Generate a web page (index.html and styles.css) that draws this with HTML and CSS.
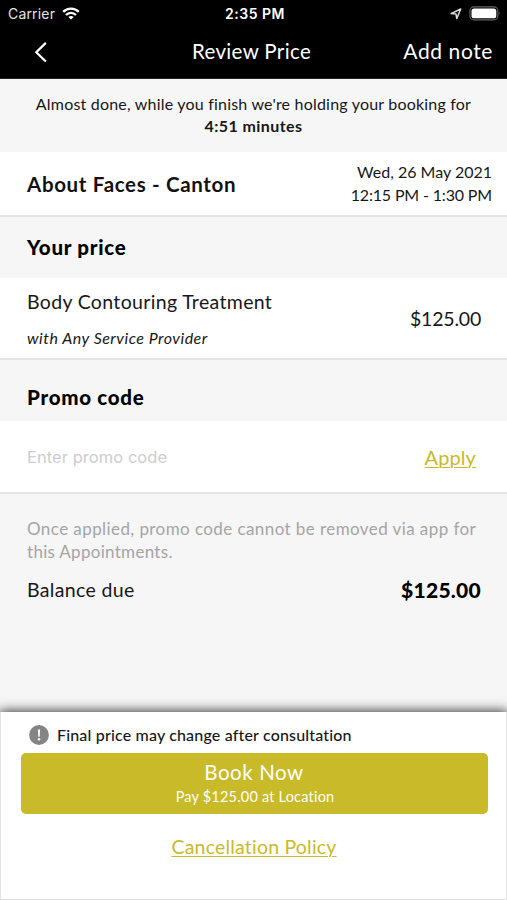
FILE: index.html
```html
<!DOCTYPE html>
<html lang="en">
<head>
<meta charset="utf-8">
<title>Review Price</title>
<link rel="stylesheet" href="styles.css">
</head>
<body>
<div class="screen">
  <header class="header">
    <div class="status">
      <div class="status-left">
        <span class="carrier">Carrier</span>
        <svg class="wifi" viewBox="0 0 18 13" width="18" height="13" fill="none" stroke="#fff" stroke-width="2.3">
          <path d="M1.200 4.900C5.400.6 12.600.6 16.800 4.900"/>
          <path d="M4 8C6.700 5.100 11.300 5.100 14 8"/>
          <path d="M9 12.600 6.300 9.900Q9 7.900 11.700 9.900Z" fill="#fff" stroke="none"/>
        </svg>
      </div>
      <span class="clock">2:35 PM</span>
      <div class="status-right">
        <svg viewBox="0 0 12 12" width="12" height="12" fill="none" stroke="#ddd" stroke-width="1.5" stroke-linejoin="round"><path d="M1.200 5.600 10.700 1 6.800 10.500 6 6.100Z"/></svg>
        <svg viewBox="0 0 32 15" width="32" height="15"><rect x=".9" y=".9" width="28" height="13" rx="4" fill="none" stroke="#666" stroke-width="1.100"/><rect x="2.500" y="2.500" width="24.800" height="9.800" rx="2.600" fill="#fff"/><path d="M30.300 5.200Q31.700 7.400 30.300 9.600Z" fill="#777"/></svg>
      </div>
    </div>
    <nav class="nav">
      <svg class="back" viewBox="0 0 14 22" width="14" height="22" fill="none" stroke="#fff" stroke-width="2.200"><path d="M11.800 1.900 2.300 11.200 11.800 20.500"/></svg>
      <h1 class="title">Review Price</h1>
      <a class="add-note">Add note</a>
    </nav>
  </header>

  <section class="hold">
    <p class="hold-text">Almost done, while you finish we're holding your booking for</p>
    <p class="hold-time">4:51 minutes</p>
  </section>

  <section class="row salon">
    <h2 class="salon-name">About Faces - Canton</h2>
    <div class="when"><p>Wed, 26 May 2021</p><p class="hours">12:15 PM - 1:30 PM</p></div>
  </section>

  <h3 class="heading price-heading">Your price</h3>
  <section class="row service">
    <div>
      <p class="service-name">Body Contouring Treatment</p>
      <p class="provider">with Any Service Provider</p>
    </div>
    <span class="price">$125.00</span>
  </section>

  <h3 class="heading promo-heading">Promo code</h3>
  <section class="row promo">
    <span class="placeholder">Enter promo code</span>
    <a class="apply">Apply</a>
  </section>

  <section class="summary">
    <p class="note">Once applied, promo code cannot be removed via app for<br><span class="note-end">this Appointments.</span></p>
    <div class="balance"><span class="balance-label">Balance due</span><strong class="balance-value">$125.00</strong></div>
  </section>

  <footer class="footer">
    <div class="notice">
      <svg viewBox="0 0 20 20" width="20" height="20"><circle cx="10" cy="10" r="9.900" fill="#858585"/><path d="M8.900 4.500h2.200l-.4 7.300H9.300Z" fill="#fff"/><circle cx="10" cy="14.300" r="1.200" fill="#fff"/></svg>
      <span class="notice-text">Final price may change after consultation</span>
    </div>
    <button class="book"><span class="book-title">Book Now</span><span class="book-sub">Pay $125.00 at Location</span></button>
    <a class="policy">Cancellation Policy</a>
  </footer>
</div>
</body>
</html>
```
FILE: styles.css
```css
* { box-sizing: border-box; margin: 0; }
body { background: #f6f6f6; color: #171717; font-family: Lato, "Liberation Sans", sans-serif; }
.screen { display: flex; flex-direction: column; width: 507px; height: 900px; overflow: hidden; }

.header { height: 79px; background: #000; color: #fff; border-bottom: 1px solid #222; }
.status { display: grid; grid-template-columns: 1fr auto 1fr; align-items: center; height: 27px; padding: 0 6px 0 8px; font: 14px/27px Inter, sans-serif; }
.status-left { display: flex; align-items: center; gap: 7px; }
.carrier { color: #e4e4e4; letter-spacing: .18px; }
.clock { margin-left: 1px; font-weight: 600; letter-spacing: .5px; }
.status-right { display: flex; align-items: center; justify-content: flex-end; gap: 7px; }
.nav { display: grid; grid-template-columns: 1fr auto 1fr; align-items: center; height: 50px; padding: 0 14px 0 34px; line-height: 48px; }
.title { margin-left: -24px; font-size: 20.500px; font-weight: 400; line-height: 48px; letter-spacing: .36px; }
.nav .title, .add-note { padding-bottom: 2px; }
.add-note { justify-self: end; font-size: 21px; letter-spacing: .6px; }

.hold { height: 73px; padding-top: 14px; text-align: center; font-size: 16px; line-height: 22px; }
.hold-text { letter-spacing: .2px; }
.hold-time { font-weight: 700; letter-spacing: .42px; }

.row { display: flex; align-items: center; justify-content: space-between; flex: none; padding: 0 26px 0 27px; background: #fff; border-bottom: 2px solid #e4e4e4; }
.salon { height: 65px; padding-right: 15px; }
.salon-name { font-size: 20.500px; font-weight: 700; letter-spacing: .66px; color: #111; }
.when { padding-bottom: 2px; text-align: right; font-size: 16px; line-height: 23px; }
.hours { letter-spacing: -.16px; }

.heading { flex: none; padding-left: 27px; font-size: 20.500px; font-weight: 900; color: #000; letter-spacing: .72px; }
.price-heading { height: 61px; line-height: 60px; }
.promo-heading { height: 61px; line-height: 75px; }

.service { height: 82px; }
.service-name { padding-top: 3px; font-size: 19.500px; line-height: 36px; letter-spacing: .34px; }
.provider { font-size: 16px; line-height: 36px; font-style: italic; letter-spacing: .5px; }
.price { font-size: 19.500px; letter-spacing: -.2px; }

.promo { height: 73px; padding-right: 31px; }
.placeholder { padding-top: 1px; font: 16.500px Inter, sans-serif; color: #cdcdcd; letter-spacing: .05px; }
.apply, .policy { color: #c9ba29; text-decoration: underline; text-decoration-thickness: 1px; text-underline-offset: 2px; }
.apply { font-size: 20px; letter-spacing: .1px; }

.summary { flex: 1; padding: 23px 26px 0 27px; }
.note { font-size: 17px; line-height: 23px; color: #a5a5a5; letter-spacing: .42px; white-space: nowrap; }
.note-end { letter-spacing: .3px; }
.balance { display: flex; justify-content: space-between; padding-top: 11px; line-height: 31px; }
.balance-label { font-size: 19.500px; letter-spacing: .34px; }
.balance-value { font-size: 21px; font-weight: 900; letter-spacing: .26px; color: #000; }

.footer { display: flex; flex-direction: column; align-items: center; flex: none; height: 188px; padding: 12px 19px 0 20px; background: #fff; border: solid #e2e2e2; border-width: 0 1px 1px; box-shadow: 0 0 11px 1px #333; }
.notice { display: flex; align-items: center; align-self: flex-start; gap: 8px; height: 22px; padding-left: 8px; font-size: 16px; font-weight: 500; letter-spacing: .17px; }
.notice-text { padding-bottom: 2px; }
.book { display: flex; flex-direction: column; align-items: center; width: 467px; height: 61px; margin-top: 7px; padding: 7px 0 0; border: 0; border-radius: 5px; background: #c9ba29; color: #fff; font-family: inherit; }
.book-title { font-size: 20.500px; line-height: 25px; letter-spacing: .58px; }
.book-sub { padding-left: 2px; font-size: 14.500px; line-height: 23px; letter-spacing: .2px; }
.policy { margin-top: 20px; font-size: 19.500px; line-height: 26px; letter-spacing: .2px; }
```
